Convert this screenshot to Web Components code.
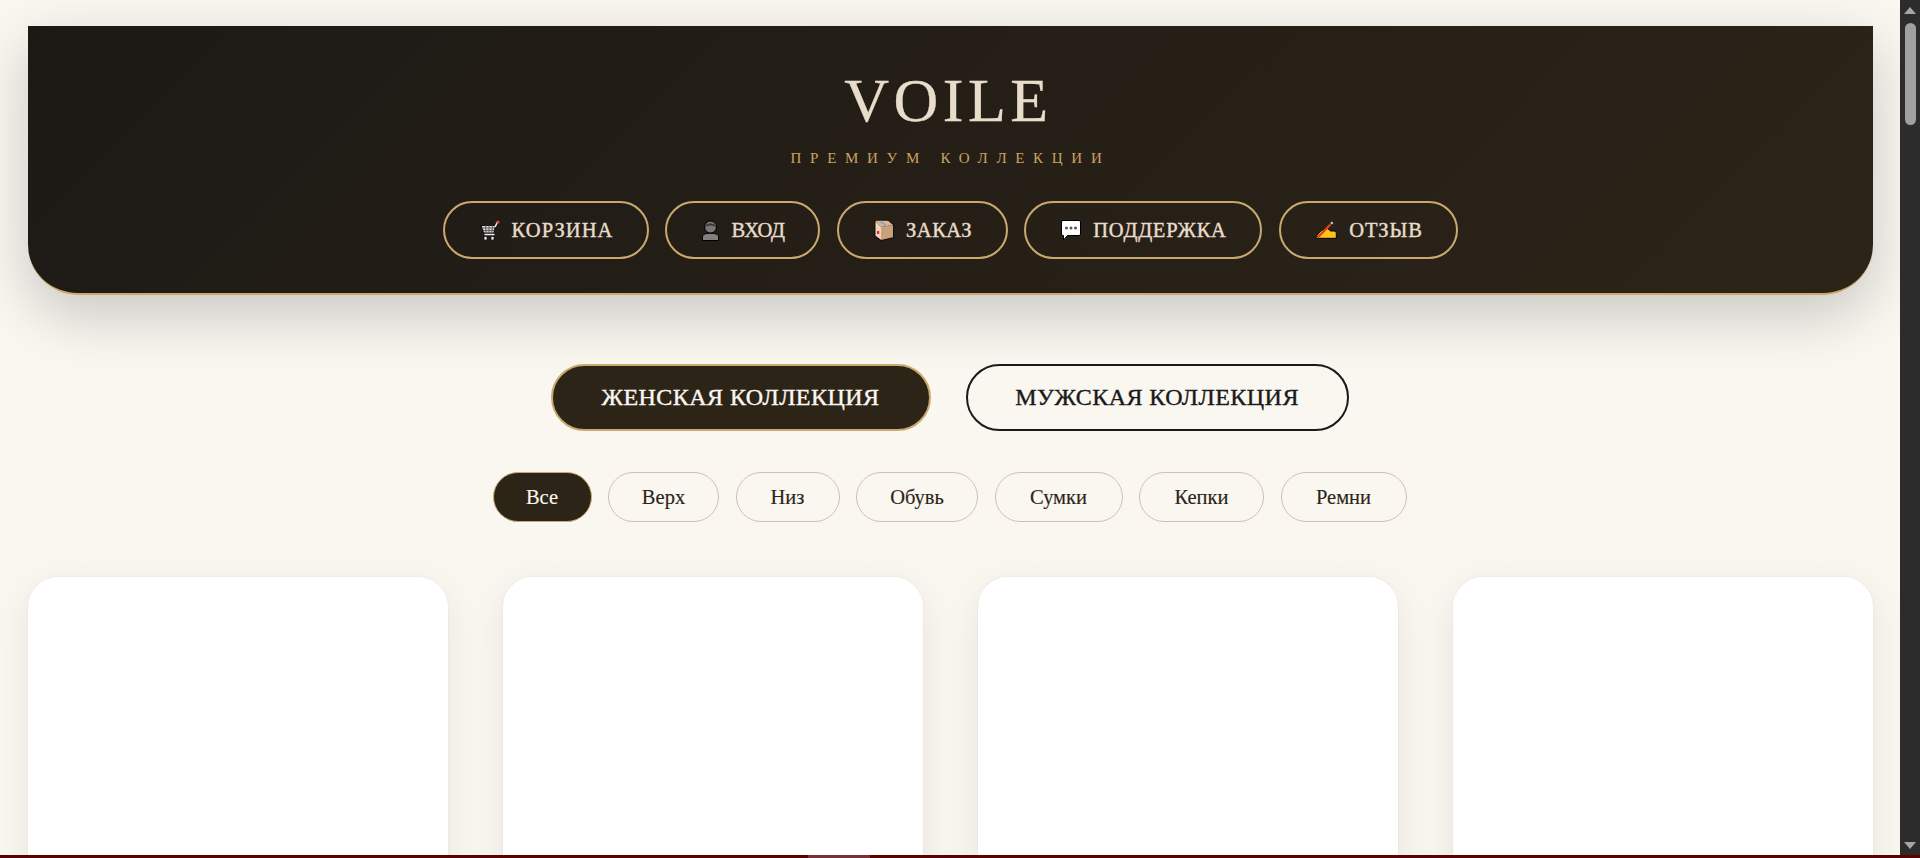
<!DOCTYPE html>
<html lang="ru"><head><meta charset="utf-8"><title>VOILE</title>
<style>
html,body{margin:0;height:100%;overflow:hidden;background:#faf7f1;font-family:"Liberation Serif",serif}
</style></head><body>
<voile-app>
  <voile-header></voile-header>
  <voile-toggle></voile-toggle>
  <voile-filters></voile-filters>
  <voile-grid></voile-grid>
</voile-app>
<script>
const ICONS={
cart:`<svg viewBox="0 0 20 21" width="20" height="21"><path d="M1 5.500h14.500l-1.500 7.500H3.500z" fill="#d9d9d9" stroke="#111" stroke-width="1.200"/><path d="M2 8h13M3 10.500h11.500M5.500 5.500l.7 7.500M9 5.500V13M12.500 5.500l-.7 7.500" stroke="#555" stroke-width=".9"/><path d="M14.500 14.500H4.500M15 7l2.500-5" fill="none" stroke="#eee" stroke-width="1.600"/><circle cx="18" cy="2" r="1.600" fill="#d94b3c"/><rect x="4" y="16.500" width="3" height="3.500" fill="#eee" stroke="#111" stroke-width=".7"/><rect x="11" y="16.500" width="3" height="3.500" fill="#eee" stroke="#111" stroke-width=".7"/></svg>`,
bust:`<svg viewBox="0 0 17 21" width="17" height="21"><path d="M.5 20.500v-3.500c0-2.500 2.800-3.700 8-3.700s8 1.200 8 3.700v3.500z" fill="#808080" stroke="#000"/><circle cx="8.500" cy="7" r="6" fill="#777" stroke="#000"/><path d="M3 7.500C2.500 2 14.500 2 14 7.500 13 4.800 4 4.800 3 7.500z" fill="#3a3a3a"/></svg>`,
box:`<svg viewBox="0 0 20 22" width="20" height="22"><path d="M.5.800H14.200L20 5.800V19L7 22 .5 17.300z" fill="#111"/><path d="M1.500 2L7 8V20.700L1.500 16.700z" fill="#f2d4bb"/><path d="M1.500 1.800H14L19 6 7 8z" fill="#dcb695"/><path d="M6 2.200L12.500 7" stroke="#9aa5b5" stroke-width="2"/><path d="M7 8L19 6V18.200L7 21z" fill="#c9a07a"/><rect x="3" y="12" width="2.200" height="3" fill="#d8232a"/></svg>`,
chat:`<svg viewBox="0 0 20 21" width="20" height="21"><path d="M2 .5h16A1.500 1.500 0 0 1 19.500 2v12a1.500 1.500 0 0 1-1.500 1.500H6.500L2.500 20v-4.500H2A1.500 1.500 0 0 1 .5 14V2A1.500 1.500 0 0 1 2 .5z" fill="#fff" stroke="#000"/><circle cx="5.500" cy="8" r="1.500" fill="#555"/><circle cx="10" cy="8" r="1.500" fill="#555"/><circle cx="14.500" cy="8" r="1.500" fill="#555"/></svg>`,
pen:`<svg viewBox="0 0 22 18" width="22" height="18"><path d="M.7 17.300c1.300-4 4.800-7.800 8-8.800l4-1 3 2.500h3c1.800 0 2.600 1 2.600 2.500v4.800z" fill="#fcc21b" stroke="#000"/><path d="M2.500 16.500L15.500 3.500" stroke="#d8401f" stroke-width="2.400"/><circle cx="16.800" cy="2" r="1.600" fill="#c8c8c8" stroke="#222" stroke-width=".5"/></svg>`};
function el(name,css,html){customElements.define(name,class extends HTMLElement{
  constructor(){super();const r=this.attachShadow({mode:"open"});r.innerHTML=`<style>${css}</style>${html}`;}});}
const HDR=[["cart","КОРЗИНА",206,1.07],["bust","ВХОД",155,-.4],["box","ЗАКАЗ",171,.5],["chat","ПОДДЕРЖКА",238,.75],["pen","ОТЗЫВ",179,.9]];
el("voile-app",`:host{display:block;height:858px;position:relative;overflow:hidden;background:#faf7f1}
.page{width:1900px;height:858px;box-sizing:border-box;padding:26px 27px 0 28px;overflow:hidden}
.bar{position:absolute;right:0;top:0;bottom:0;width:20px;background:#2c2c2c}
.up,.down{position:absolute;left:4px;width:0;height:0;border-left:6.500px solid transparent;border-right:6.500px solid transparent}
.up{top:7px;border-bottom:7px solid #a6a6a6}.down{bottom:9px;border-top:7px solid #a6a6a6}
.thumb{position:absolute;left:5px;top:23px;width:11px;height:102px;border-radius:6px;background:#a0a0a0}
.strip{position:absolute;left:0;right:0;bottom:0;height:3px;background:#5a0000}
.strip i{position:absolute;left:808px;width:62px;top:0;bottom:0;background:#7a3034}`,
`<div class="page"><slot></slot></div><div class="bar"><div class="up"></div><div class="thumb"></div><div class="down"></div></div><div class="strip"><i></i></div>`);
el("voile-header",`:host{display:block;height:269px;box-sizing:border-box;padding-top:43px;text-align:center;color:#e8dccb;background:linear-gradient(135deg,#1c1915,#2d2418);border-bottom:2px solid #c9a96e;border-radius:0 0 50px 50px;box-shadow:0 20px 60px rgba(0,0,0,.2)}
h1{margin:0;padding-right:4px;font:400 62px/1 "Liberation Serif",serif;letter-spacing:4.500px;height:62px;-webkit-text-stroke:.3px #e8dccb}
p{margin:17px 0 0;font:15px/20px "Liberation Serif",serif;letter-spacing:8.700px;color:#c9a35f}
nav{display:flex;justify-content:center;gap:16.500px;margin-top:33px;padding-right:1px}
a{box-sizing:border-box;height:58px;padding-left:2px;border:2px solid #c9a96e;border-radius:29px;display:flex;align-items:center;justify-content:center;gap:12px;font:400 20.500px "Liberation Serif",serif;color:#e8dccb;-webkit-text-stroke:.4px #e8dccb}
svg{display:block;flex:none}`,
`<h1>VOILE</h1><p>ПРЕМИУМ КОЛЛЕКЦИИ</p><nav>${HDR.map(h=>`<a style="width:${h[2]}px;letter-spacing:${h[3]}px">${ICONS[h[0]]}<span>${h[1]}</span></a>`).join("")}</nav>`);
el("voile-toggle",`:host{display:flex;justify-content:center;gap:35px;margin-top:69px;padding-right:2px}
b{box-sizing:border-box;height:67px;border-radius:34px;display:flex;align-items:center;justify-content:center;font:400 24px "Liberation Serif",serif;letter-spacing:.45px;border:2px solid #1a1a1a;color:#1a1a1a;-webkit-text-stroke:.4px currentColor}
.on{background:#2d2418;border-color:#c9a96e;color:#faf7f1}`,
`<b class="on" style="width:380px">ЖЕНСКАЯ КОЛЛЕКЦИЯ</b><b style="width:383px">МУЖСКАЯ КОЛЛЕКЦИЯ</b>`);
const F=[["Все",99],["Верх",111],["Низ",104],["Обувь",122],["Сумки",128],["Кепки",125],["Ремни",126]];
el("voile-filters",`:host{display:flex;justify-content:center;gap:16.500px;margin-top:41px;padding-right:2px}
span{box-sizing:border-box;height:50px;border-radius:25px;border:1px solid #d4c0aa;display:flex;align-items:center;justify-content:center;font:20.500px "Liberation Serif",serif;color:#2d2418;-webkit-text-stroke:.15px currentColor}
.on{background:#2d2418;border-color:#c9a96e;color:#faf7f1}`,
F.map((f,i)=>`<span class="${i?"":"on"}" style="width:${f[1]}px">${f[0]}</span>`).join(""));
el("voile-grid",`:host{display:grid;grid-template-columns:repeat(4,420px);gap:55px;margin-top:55px}
div{height:500px;background:#fff;border-radius:30px;box-shadow:0 0 0 1px rgba(120,100,70,.03),0 10px 40px rgba(0,0,0,.08)}`,
`<div></div><div></div><div></div><div></div>`);
</script></body></html>
